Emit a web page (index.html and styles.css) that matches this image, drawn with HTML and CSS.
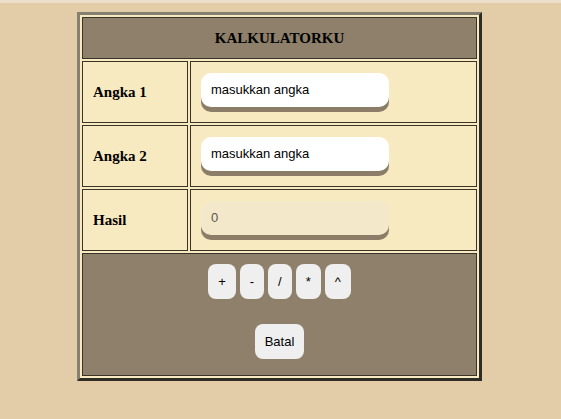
FILE: index.html
```html
<!DOCTYPE html>
<html>
<head>
<meta charset="utf-8">
<link rel="stylesheet" href="styles.css">
</head>
<body>
<table class="calc">
  <tr>
    <th class="title" colspan="2">KALKULATORKU</th>
  </tr>
  <tr>
    <td class="label">Angka 1</td>
    <td class="field"><input class="num" type="text" placeholder="masukkan angka"></td>
  </tr>
  <tr>
    <td class="label">Angka 2</td>
    <td class="field"><input class="num" type="text" placeholder="masukkan angka"></td>
  </tr>
  <tr>
    <td class="label">Hasil</td>
    <td class="field"><input class="num result" type="text" value="0" disabled></td>
  </tr>
  <tr>
    <td class="actions" colspan="2">
      <div class="ops">
        <button class="btn">+</button>
        <button class="btn">-</button>
        <button class="btn">/</button>
        <button class="btn">*</button>
        <button class="btn">^</button>
      </div>
      <div class="reset">
        <button class="btn">Batal</button>
      </div>
    </td>
  </tr>
</table>
</body>
</html>
```

FILE: styles.css
```css
html {
  background: #e3cda9;
  border-top: 3px solid #ebdfcb;
}
body {
  margin: 9px 9px 8px 7px;
  font-family: "Liberation Serif", serif;
}
.calc {
  width: 405px;
  margin: 0 auto;
  border-collapse: separate;
  border-spacing: 2px;
  border-style: solid;
  border-width: 3px;
  border-color: #858070 #2f2c25 #2f2c25 #858070;
  background: #f7eac2;
}
.calc th,
.calc td {
  border: 1px solid #3a3427;
  padding: 0;
}
.title {
  height: 40px;
  background: #8e806a;
  font-size: 15px;
  font-weight: bold;
  color: #000;
  text-align: center;
}
.label {
  box-sizing: border-box;
  width: 106px;
  height: 62px;
  padding-left: 10px !important;
  background: #f8eac0;
  font-size: 15px;
  font-weight: bold;
}
.field {
  background: #f8eac0;
  padding: 0 0 0 10px !important;
}
.num {
  display: block;
  box-sizing: border-box;
  width: 188px;
  height: 34px;
  margin: 0 0 5px;
  padding: 0 10px;
  border: none;
  border-radius: 10px;
  background: #fff;
  box-shadow: 0 5px 0 #8b7d67;
  font-family: "Liberation Sans", sans-serif;
  font-size: 13px;
  color: #000;
  outline: none;
}
.num::placeholder {
  color: #000;
  opacity: 1;
}
.num.result {
  background: #f4e8cb;
  color: #5a554b;
}
.actions {
  box-sizing: border-box;
  height: 123px;
  background: #8e806a;
  text-align: center;
  vertical-align: top;
}
.ops {
  display: flex;
  justify-content: center;
  gap: 4px;
  padding-top: 10px;
}
.reset {
  display: flex;
  justify-content: center;
  padding-top: 25px;
}
.btn {
  height: 35px;
  padding: 0 10px;
  border: none;
  border-radius: 8px;
  background: #efefef;
  font-family: "Liberation Sans", sans-serif;
  font-size: 13px;
  color: #000;
}
```
